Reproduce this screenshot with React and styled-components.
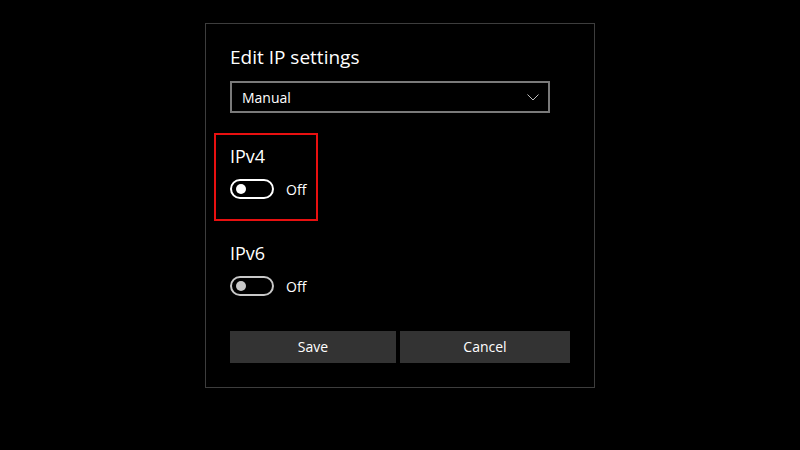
import styled, { createGlobalStyle } from "styled-components";

const GlobalStyle = createGlobalStyle`
  html, body {
    margin: 0;
    padding: 0;
    background: #000;
  }
  body {
    font-family: "Open Sans", "Noto Sans", sans-serif;
    color: #fff;
  }
`;

const Page = styled.div`
  width: 800px;
  height: 450px;
  display: flex;
  justify-content: center;
  align-items: flex-start;
  padding-top: 23px;
  box-sizing: border-box;
`;

const Dialog = styled.div`
  width: 390px;
  height: 365px;
  box-sizing: border-box;
  border: 1px solid #3d3d3d;
  padding: 18px 24px 0 24px;
  display: flex;
  flex-direction: column;
`;

const Title = styled.h1`
  margin: 0;
  font-size: 19px;
  font-weight: 400;
  line-height: 30px;
  height: 30px;
`;

const Select = styled.div`
  margin-top: 9px;
  width: 320px;
  height: 32px;
  box-sizing: border-box;
  border: 2px solid #7a7a7a;
  display: flex;
  align-items: center;
  justify-content: space-between;
  padding: 0 9px 0 10px;
  font-size: 14px;
`;

const Section = styled.div`
  margin-top: ${(p) => p.$top}px;
  margin-left: ${(p) => (p.$highlight ? "-16px" : "0")};
  padding: ${(p) => (p.$highlight ? "8px 14px 0 14px" : "0")};
  width: ${(p) => (p.$highlight ? "104px" : "auto")};
  height: ${(p) => (p.$highlight ? "88px" : "auto")};
  box-sizing: border-box;
  border: ${(p) => (p.$highlight ? "2px solid #e81010" : "none")};
`;

const Label = styled.div`
  font-size: 18px;
  line-height: 26px;
  height: 26px;
`;

const ToggleRow = styled.div`
  margin-top: 10px;
  display: flex;
  align-items: center;
  gap: 12px;
  font-size: 14px;
  white-space: nowrap;
`;

const Track = styled.div`
  flex-shrink: 0;
  width: 44px;
  height: 20px;
  box-sizing: border-box;
  border: 2px solid ${(p) => (p.$disabled ? "#c8c8c8" : "#fff")};
  border-radius: 10px;
  display: flex;
  align-items: center;
  padding-left: 4px;
`;

const Knob = styled.div`
  width: 10px;
  height: 10px;
  border-radius: 50%;
  background: ${(p) => (p.$disabled ? "#c8c8c8" : "#fff")};
`;

const Buttons = styled.div`
  margin-top: 35px;
  display: grid;
  grid-template-columns: 166px 170px;
  gap: 4px;
`;

const Button = styled.button`
  height: 32px;
  border: none;
  background: #333;
  color: #fff;
  font-family: inherit;
  font-size: 14px;
  line-height: 31px;
  padding: 0 0 1px 0;
`;

function Chevron() {
  return (
    <svg width="12" height="7" viewBox="0 0 12 7">
      <path d="M0.5 0.5 L6 6 L11.5 0.5" fill="none" stroke="#bdbdbd" strokeWidth="1" />
    </svg>
  );
}

function Toggle({ label, disabled }) {
  return (
    <ToggleRow>
      <Track $disabled={disabled}>
        <Knob $disabled={disabled} />
      </Track>
      <span>{label}</span>
    </ToggleRow>
  );
}

export default function App() {
  return (
    <>
      <GlobalStyle />
      <Page>
        <Dialog>
          <Title>Edit IP settings</Title>
          <Select>
            <span>Manual</span>
            <Chevron />
          </Select>
          <Section $highlight $top={20}>
            <Label>IPv4</Label>
            <Toggle label="Off" />
          </Section>
          <Section $top={19}>
            <Label>IPv6</Label>
            <Toggle label="Off" disabled />
          </Section>
          <Buttons>
            <Button>Save</Button>
            <Button>Cancel</Button>
          </Buttons>
        </Dialog>
      </Page>
    </>
  );
}
